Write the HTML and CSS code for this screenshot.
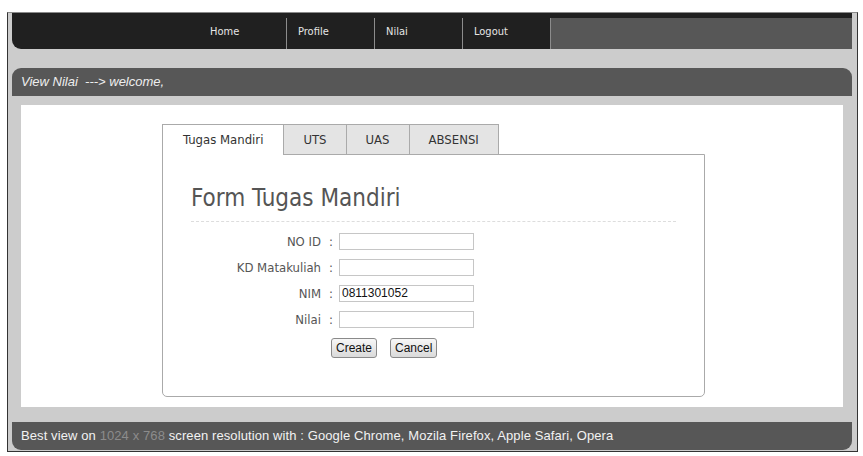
FILE: index.html
```html
<!DOCTYPE html>
<html lang="en">
<head>
    <meta charset="UTF-8">
    <meta name="viewport" content="width=device-width, initial-scale=1.0">
    <title>View Nilai</title>
    <link rel="stylesheet" href="styles.css">
</head>
<body>
    <div class="frame">
        <header class="topbar">
            <div class="topbar-left"></div>
            <nav class="menu">
                <a href="#">Home</a>
                <a href="#">Profile</a>
                <a href="#">Nilai</a>
                <a href="#">Logout</a>
            </nav>
            <div class="topbar-fill"></div>
        </header>

        <div class="breadcrumb">View Nilai &nbsp;---&gt; welcome,</div>

        <main class="content">
            <div class="tabs">
                <ul class="tab-list">
                    <li class="tab active">Tugas Mandiri</li>
                    <li class="tab">UTS</li>
                    <li class="tab">UAS</li>
                    <li class="tab">ABSENSI</li>
                </ul>
                <div class="tab-panel">
                    <h2 class="form-title">Form Tugas Mandiri</h2>
                    <form class="form">
                        <div class="row">
                            <label>NO ID</label><span class="colon">:</span>
                            <input type="text">
                        </div>
                        <div class="row">
                            <label>KD Matakuliah</label><span class="colon">:</span>
                            <input type="text">
                        </div>
                        <div class="row">
                            <label>NIM</label><span class="colon">:</span>
                            <input type="text" value="0811301052">
                        </div>
                        <div class="row">
                            <label>Nilai</label><span class="colon">:</span>
                            <input type="text">
                        </div>
                        <div class="buttons">
                            <button type="button">Create</button>
                            <button type="button">Cancel</button>
                        </div>
                    </form>
                </div>
            </div>
        </main>

        <footer class="footer">
            Best view on <span class="res">1024 x 768</span> screen resolution with : Google Chrome, Mozila Firefox, Apple Safari, Opera
        </footer>
    </div>
</body>
</html>
```

FILE: styles.css
```css
/* Global Styles */
body {
    margin: 0;
    background-color: #FFFFFF;
    font-family: 'Liberation Sans', Arial, sans-serif;
}

.frame {
    margin: 12px 4px 0 7px;
    width: 840px;
    padding: 0 5px 1px 4px;
    background-color: #CCCCCC;
    border: 1px solid #333333;
    border-top-color: #8A8A8A;
}

/* Top navigation */
.topbar {
    display: flex;
    height: 36px;
    background-color: #202020;
    border-bottom-left-radius: 9px;
}

.topbar-left {
    width: 187px;
}

.menu {
    display: flex;
    margin-top: 5px;
}

.menu a {
    box-sizing: border-box;
    width: 88px;
    padding: 7px 0 0 11px;
    border-right: 1px solid #8C8C8C;
    color: #E6E6E6;
    text-decoration: none;
    font-family: 'DejaVu Sans Condensed', 'DejaVu Sans', sans-serif;
    font-size: 11px;
}

.topbar-fill {
    flex: 1;
    margin-top: 5px;
    background-color: #575757;
}

.breadcrumb {
    margin-top: 19px;
    height: 28px;
    line-height: 28px;
    padding-left: 9px;
    background-color: #575757;
    border-radius: 9px 9px 0 0;
    color: #EEEEEE;
    font-size: 13px;
    font-style: italic;
}

/* White content area */
.content {
    margin: 9px 9px 0 9px;
    padding: 19px 0 10px;
    background-color: #FFFFFF;
}

.tabs {
    width: 543px;
    margin-left: 141px;
    font-family: 'DejaVu Sans Condensed', 'DejaVu Sans', sans-serif;
    color: #444444;
}

.tab-list {
    display: flex;
    margin: 0;
    padding: 0;
    list-style: none;
}

.tab {
    height: 29px;
    line-height: 29px;
    padding: 0 19px;
    margin-right: -1px;
    background-color: #E4E4E4;
    border: 1px solid #AAAAAA;
    border-bottom: none;
    font-size: 13px;
    color: #333333;
}

.tab.active {
    background-color: #FFFFFF;
    position: relative;
    z-index: 1;
    height: 30px;
    padding: 0 20px;
    margin-bottom: -1px;
}

.tab-panel {
    height: 241px;
    border: 1px solid #AAAAAA;
    border-radius: 0 0 5px 5px;
    padding: 0 28px;
}

.form-title {
    margin: 29px 0 0;
    padding-bottom: 9px;
    border-bottom: 1px dashed #DDDDDD;
    font-size: 24px;
    font-weight: normal;
    color: #555555;
}

.form {
    margin-top: 6px;
}

.row {
    display: flex;
    align-items: center;
    height: 26px;
}

.row label {
    width: 130px;
    text-align: right;
    font-size: 13px;
    color: #555555;
}

.colon {
    margin: 0 6px 0 8px;
    font-size: 13px;
    color: #555555;
}

.row input {
    box-sizing: border-box;
    width: 135px;
    height: 17px;
    padding: 0 2px;
    border: 1px solid #C6C6C6;
    font-family: 'Liberation Sans', Arial, sans-serif;
    font-size: 12px;
    color: #111111;
}

.buttons {
    display: flex;
    gap: 13px;
    margin: 6px 0 0 140px;
}

.buttons button {
    height: 20px;
    padding: 0 4px;
    border: 1px solid #8A8A8A;
    border-radius: 3px;
    background: linear-gradient(#F7F7F7, #DADADA);
    font-family: 'Liberation Sans', Arial, sans-serif;
    font-size: 12px;
    color: #111111;
}

.footer {
    margin-top: 15px;
    height: 28px;
    line-height: 28px;
    padding-left: 9px;
    background-color: #575757;
    border-radius: 0 0 9px 9px;
    color: #F2F2F2;
    font-size: 13px;
    letter-spacing: 0.1px;
}

.footer .res {
    color: #8C8C8C;
}
```
